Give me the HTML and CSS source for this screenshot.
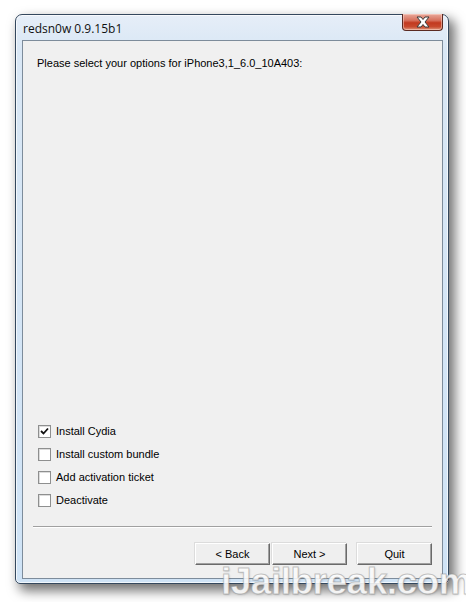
FILE: index.html
```html
<!DOCTYPE html>
<html>
<head>
<meta charset="utf-8">
<link rel="stylesheet" href="styles.css">
</head>
<body>
<div class="window">
  <div class="titlebar">
    <span class="title">redsn0w 0.9.15b1</span>
    <span class="close">
      <svg width="20" height="12" viewBox="0 0 20 12">
        <path d="M4 1 H8 L10 3.5 L12 1 H16 L12 6 L16 11 H12 L10 8.5 L8 11 H4 L8 6 Z" fill="#ffffff" stroke="#3b3b3b" stroke-width="1" stroke-linejoin="round"/>
      </svg>
    </span>
  </div>
  <div class="client">
    <p class="intro">Please select your options for iPhone3,1_6.0_10A403:</p>
    <div class="spacer"></div>
    <div class="options">
      <label class="opt"><span class="box checked"><svg width="9" height="9" viewBox="0 0 9 9"><path d="M1 4 L3.5 6.5 L8 1.5" fill="none" stroke="#111" stroke-width="1.8"/></svg></span>Install Cydia</label>
      <label class="opt"><span class="box"></span>Install custom bundle</label>
      <label class="opt"><span class="box"></span>Add activation ticket</label>
      <label class="opt"><span class="box"></span>Deactivate</label>
    </div>
    <div class="sep"></div>
    <div class="buttons">
      <button class="btn">&lt; Back</button>
      <button class="btn next">Next &gt;</button>
      <button class="btn quit">Quit</button>
    </div>
  </div>
</div>
<div class="watermark">iJailbreak.com</div>
</body>
</html>
```

FILE: styles.css
```css
html, body {
  margin: 0;
  padding: 0;
  background: #ffffff;
  width: 466px;
  height: 602px;
  overflow: hidden;
}
body {
  padding: 14px 0 0 15px;
  box-sizing: border-box;
  position: relative;
}
.window {
  width: 434px;
  height: 570px;
  box-sizing: border-box;
  border: 1px solid #34485e;
  border-radius: 7px 7px 5px 5px;
  background: linear-gradient(to bottom, #e6eef8 0%, #d9e7f5 6%, #cfe3f6 100%);
  box-shadow: 5px 6px 12px 1px rgba(0,0,0,0.55), inset 0 0 0 1px rgba(255,255,255,0.7);
  display: flex;
  flex-direction: column;
  padding: 0 5px 4px 6px;
}
.titlebar {
  height: 25px;
  display: flex;
  align-items: flex-start;
  justify-content: space-between;
  flex-shrink: 0;
}
.title {
  font-family: "Open Sans", "Noto Sans", sans-serif;
  font-size: 12px;
  color: #111;
  margin: 6px 0 0 1px;
  line-height: 16px;
}
.close {
  width: 41px;
  height: 17px;
  margin-top: -1px;
  box-sizing: border-box;
  border: 1px solid #5a2a22;
  border-top: none;
  border-radius: 0 0 4px 4px;
  background: linear-gradient(to bottom, #e9a99b 0%, #d6705c 40%, #c2391f 55%, #c84a2e 80%, #e09a80 100%);
  display: flex;
  align-items: center;
  justify-content: center;
  box-shadow: inset 0 0 0 1px rgba(255,220,210,0.5);
}
.close svg { display: block; }
.client {
  flex: 1;
  border: 1px solid #7d8c9b;
  background: #f0f0f0;
  display: flex;
  flex-direction: column;
  padding: 16px 10px 13px 10px;
  font-family: "Liberation Sans", Arial, sans-serif;
  font-size: 11px;
  color: #000;
}
.intro {
  margin: 0 0 0 4px;
  line-height: 13px;
}
.spacer { flex: 1; }
.options {
  display: flex;
  flex-direction: column;
  gap: 10px;
  margin-left: 5px;
}
.opt {
  display: flex;
  align-items: center;
  height: 13px;
  line-height: 13px;
}
.box {
  width: 13px;
  height: 13px;
  box-sizing: border-box;
  border: 1px solid #8e8f8f;
  background: #fff;
  margin-right: 5px;
  display: flex;
  align-items: center;
  justify-content: center;
  box-shadow: inset 1px 1px 0 #dcdcdc;
}
.sep {
  height: 1px;
  background: #a0a0a0;
  border-bottom: 1px solid #ffffff;
  margin-top: 19px;
}
.buttons {
  display: flex;
  justify-content: flex-end;
  margin-top: 15px;
}
.btn {
  width: 75px;
  height: 22px;
  box-sizing: border-box;
  font-family: "Liberation Sans", Arial, sans-serif;
  font-size: 11px;
  color: #000;
  background: #efefef;
  border: 1px solid;
  border-color: #ffffff #6a6a6a #6a6a6a #ffffff;
  box-shadow: inset -1px -1px 0 #a0a0a0, -1px -1px 0 #dcdcdc;
  padding: 0;
  margin: 0;
}
.next { margin-left: 2px; }
.quit { margin-left: 10px; }
.watermark {
  position: absolute;
  left: 221px;
  top: 563px;
  font-family: "Liberation Sans", Arial, sans-serif;
  font-weight: bold;
  font-size: 37px;
  line-height: 38px;
  letter-spacing: -0.5px;
  color: rgba(255,255,255,0.9);
  -webkit-text-stroke: 1px rgba(140,140,140,0.5);
  text-shadow: 1px 1px 2px rgba(0,0,0,0.15);
  white-space: nowrap;
}
```
